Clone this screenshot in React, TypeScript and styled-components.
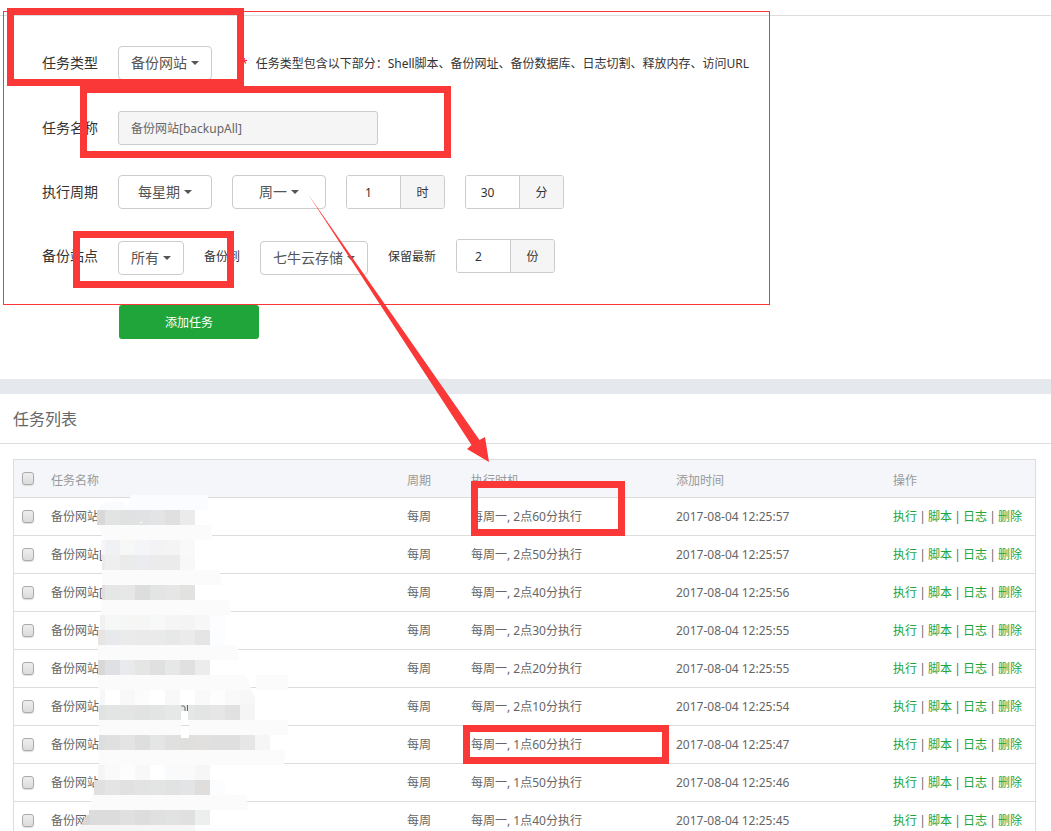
import React from "react";
import styled, { createGlobalStyle } from "styled-components";

const RED = "#fb3838";
const BORDER = "#cccccc";
const LINE = "#dddddd";
const GREEN = "#20a53a";

const GlobalStyle = createGlobalStyle`
  * { box-sizing: border-box; }
  body {
    margin: 0;
    background: #fff;
    color: #333;
    font: 12px/18px "Noto Sans", "Noto Sans CJK SC", sans-serif;
  }
  button, input, select { font-family: inherit; }
`;

const Page = styled.main`
  position: relative;
  height: 100vh;
  overflow: hidden;
  padding-top: 15px;
`;

const FormPanel = styled.form`
  display: flex;
  flex-direction: column;
  gap: 30px;
  padding: 30px 42px 40px;
  border-top: 1px solid ${LINE};
`;

const FormRow = styled.div<{ $staggered?: boolean }>`
  display: flex;
  align-items: ${(p) => (p.$staggered ? "flex-start" : "center")};
  gap: 20px;
  min-height: ${(p) => (p.$staggered ? 36 : 34)}px;
  &:first-child { margin-bottom: 1px; }
`;

const RowLabel = styled.label`
  flex: none;
  width: 56px;
  font-size: 14px;
  line-height: 34px;
  white-space: nowrap;
`;

const InlineLabel = styled.label`
  line-height: 36px;
  white-space: nowrap;
`;

const Hint = styled.p`
  margin: 0 0 0 9px;
  padding-top: 2px;
  white-space: nowrap;
`;

const Required = styled.span`
  margin-right: 8px;
  color: #f00;
`;

const SelectBox = styled.div<{ $width: number }>`
  display: flex;
  flex: none;
  align-items: center;
  align-self: flex-end;
  justify-content: center;
  gap: 4px;
  width: ${(p) => p.$width}px;
  height: 34px;
  border: 1px solid ${BORDER};
  border-radius: 4px;
  background: #fff;
`;

const Select = styled.select<{ $chars: number }>`
  width: ${(p) => p.$chars}em;
  height: 32px;
  padding: 0 0 2px;
  border: 0;
  outline: 0;
  appearance: none;
  background: transparent;
  color: #555;
  font-size: 14px;
`;

const Caret = styled.span`
  border: 4px solid transparent;
  border-top-color: #555;
  border-bottom-width: 0;
`;

const NameInput = styled.input`
  width: 260px;
  height: 34px;
  padding: 0 12px;
  border: 1px solid ${BORDER};
  border-radius: 3px;
  background: #f5f5f5;
  color: #666;
  font-size: 12px;
`;

const UnitGroup = styled.div`
  display: flex;
  width: 99px;
  height: 34px;
  border: 1px solid ${BORDER};
  border-radius: 3px;
  overflow: hidden;
`;

const UnitInput = styled.input`
  flex: 1;
  min-width: 0;
  padding: 0 10px 0 0;
  border: 0;
  color: #333;
  font-size: 12px;
  text-align: center;
  appearance: textfield;
  &::-webkit-inner-spin-button { appearance: none; margin: 0; }
`;

const Unit = styled.span`
  width: 44px;
  border-left: 1px solid ${BORDER};
  background: #f5f5f5;
  line-height: 34px;
  text-align: center;
`;

const SubmitButton = styled.button`
  width: 140px;
  height: 34px;
  margin-left: 77px;
  padding: 0;
  border: 0;
  border-radius: 3px;
  background: ${GREEN};
  color: #fff;
  font-size: 12px;
`;

const ListPanel = styled.section`
  border-top: 15px solid #e5e8ed;
`;

const ListTitle = styled.h2`
  margin: 0;
  padding: 2px 13px 0;
  border-bottom: 1px solid ${LINE};
  color: #666;
  font-size: 16px;
  font-weight: 400;
  line-height: 47px;
`;

const TableWrap = styled.div`
  padding: 15px 15px 15px 13px;
`;

const TaskTable = styled.table`
  width: 100%;
  table-layout: fixed;
  border: 1px solid ${LINE};
  border-collapse: separate;
  border-spacing: 0;
  color: #666;
`;

const Col = styled.col<{ $width?: number }>`
  width: ${(p) => (p.$width ? `${p.$width}px` : "auto")};
`;

const HeadCell = styled.th`
  height: 38px;
  padding: 4px 8px 0;
  border-bottom: 1px solid ${LINE};
  background: #f4f6fa;
  color: #999;
  font-weight: 400;
  text-align: left;
  &:first-child { padding-top: 0; }
`;

const Cell = styled.td`
  height: 38px;
  padding: 0 8px;
  border-bottom: 1px solid ${LINE};
  white-space: nowrap;
`;

const Check = styled.input`
  display: block;
  width: 12px;
  height: 13px;
  margin: 0;
  border: 1px solid #aaa;
  border-radius: 3px;
  appearance: none;
  background: linear-gradient(#eee, #dcdcdc);
  box-shadow: 0 1px 1px #ddd;
`;

const Actions = styled.div`
  display: flex;
`;

const Action = styled.a`
  color: ${GREEN};
  text-decoration: none;
`;

const Separator = styled.span`
  width: 11px;
  text-align: center;
`;

const Overlay = styled.svg`
  position: absolute;
  top: 0;
  left: 0;
  pointer-events: none;
`;

type DropdownProps = { id: string; label?: string; value: string; width: number };

function Dropdown({ id, label, value, width }: DropdownProps) {
  return (
    <SelectBox $width={width}>
      <Select id={id} aria-label={label} $chars={value.length}>
        <option>{value}</option>
      </Select>
      <Caret />
    </SelectBox>
  );
}

type UnitFieldProps = { id: string; label?: string; value: number; unit: string };

function UnitField({ id, label, value, unit }: UnitFieldProps) {
  return (
    <UnitGroup>
      <UnitInput id={id} type="number" defaultValue={value} aria-label={label} />
      <Unit>{unit}</Unit>
    </UnitGroup>
  );
}

const tasks = [
  { name: "备份网站", when: "每周一, 2点60分执行", added: "2017-08-04 12:25:57" },
  { name: "备份网站[", when: "每周一, 2点50分执行", added: "2017-08-04 12:25:57" },
  { name: "备份网站[", when: "每周一, 2点40分执行", added: "2017-08-04 12:25:56" },
  { name: "备份网站", when: "每周一, 2点30分执行", added: "2017-08-04 12:25:55" },
  { name: "备份网站", when: "每周一, 2点20分执行", added: "2017-08-04 12:25:55" },
  { name: "备份网站", when: "每周一, 2点10分执行", added: "2017-08-04 12:25:54" },
  { name: "备份网站", when: "每周一, 1点60分执行", added: "2017-08-04 12:25:47" },
  { name: "备份网站", when: "每周一, 1点50分执行", added: "2017-08-04 12:25:46" },
  { name: "备份网站", when: "每周一, 1点40分执行", added: "2017-08-04 12:25:45" },
];

const actions = ["执行", "脚本", "日志", "删除"];

// Pale brush strokes under the pixelated site names.
const strokes: { points: string; fill: string }[] = [
  { points: "131,495 208,495 208,510 128,510", fill: "#fbfcff" },
  { points: "98,510 103,503 112,501 122,502 128,508 128,510", fill: "#fafbfe" },
  { points: "98,525 211,525 212,540 104,540", fill: "#fbfbfb" },
  { points: "102,570 219,570 222,585 102,585", fill: "#fbfbfb" },
  { points: "102,600 229,600 231,615 101,615", fill: "#fbfbfb" },
  { points: "98,645 237,645 239,660 98,660", fill: "#fbfbfb" },
  { points: "98,675 245,675 252,690 98,690", fill: "#fbfbfb" },
  { points: "256,675 288,675 288,690 256,690", fill: "#fbfbfb" },
  { points: "251,690 255,697 255,720 240,720 240,690", fill: "#f7f7f7" },
  { points: "99,720 288,720 288,735 99,735", fill: "#fbfbfb" },
  { points: "99,750 286,750 284,765 99,765", fill: "#fbfbfb" },
  { points: "92,795 247,795 248,810 90,810", fill: "#fbfbfb" },
  { points: "84,820 195,825 195,831 78,831", fill: "#f6f6f6" },
];

// Each strip is 15px high; its first tile runs from x to the next 15px grid line.
const TILE = 15;
const strips: { y: number; x: number; tiles: string[] }[] = [
  { y: 510, x: 97, tiles: ["#d8d8d8", "#e2e4e4", "#e0e2e1", "#e0e2e4", "#e3e4e5", "#e0e0e0", "#ebebeb"] },
  { y: 540, x: 101, tiles: ["#f6f6f8", "#f0f1f5", "#f7f7f5", "#f4f5f8", "#f3f3f5", "#f4f4f4", "#f9f9f9"] },
  { y: 555, x: 102, tiles: ["#eaeaea", "#efeff0", "#ebebec", "#eaecef", "#ebebeb", "#ebebeb", "#f8f8f8"] },
  { y: 585, x: 102, tiles: ["#dfdfdf", "#e5e7e7", "#e7e7e7", "#dddddd", "#e3e4e4", "#e6e6e6", "#e2e2e1"] },
  { y: 615, x: 100, tiles: ["#f1f1f1", "#f6f8f8", "#f6f6f7", "#f6f6f4", "#f7f9f8", "#f5f5f5", "#f4f4f4", "#f7f7f7", "#fdfdff"] },
  { y: 630, x: 98, tiles: ["#e7e4e3", "#e7e9ed", "#ebebeb", "#eaeaea", "#eaeaea", "#e7e9e8", "#ebebeb", "#e5e5e5", "#fcfdff"] },
  { y: 660, x: 98, tiles: ["#d8d8d8", "#dfe0e3", "#e8eaeb", "#e5e5e4", "#e0e0e0", "#e5e8e7", "#e0e0e0", "#ececec"] },
  { y: 690, x: 100, tiles: ["#f6f7f8", "#ffffff", "#f8f8f8", "#fcfcfc", "#ffffff", "#f8f8f8", "#ffffff", "#f9f9f9", "#fdfdfd", "#f9f9f9"] },
  { y: 705, x: 99, tiles: ["#e1e3e3", "#e3e5e5", "#e3e4e4", "#e2e2e2", "#e3e5e4", "#e6e7e7", "#e5e6e7", "#e3e5e4", "#e6e6e6", "#e1e1e1", "#f5f5f5"] },
  { y: 735, x: 99, tiles: ["#dedede", "#e0e0e0", "#e3e4e3", "#dedede", "#e4e5e5", "#e0e0e0", "#dfdfdd", "#e2e0df", "#dfdfdf", "#dfdfdf", "#e6e6e6", "#f6f6f6"] },
  { y: 765, x: 98, tiles: ["#f5f5f5", "#fafafa", "#fdfdfd", "#f8f8f8", "#ffffff", "#f8fafb", "#fafafa", "#f6f6f6"] },
  { y: 780, x: 94, tiles: ["#e0e0e0", "#e4e4e4", "#e1e1e1", "#e3e3e3", "#e3e4e4", "#e1e3e2", "#e3e4e5", "#e0dedd", "#fcfdff"] },
  { y: 810, x: 89, tiles: ["#d8d5d6", "#dcdcdc", "#dcdcdc", "#e0e0e0", "#dddddd", "#e0e0e0", "#e0e3e2", "#e0e0e0", "#edefee"] },
];

function Strip({ y, x, tiles }: { y: number; x: number; tiles: string[] }) {
  const firstEdge = (Math.floor(x / TILE) + 1) * TILE;
  return (
    <g>
      {tiles.map((fill, i) => {
        const left = i === 0 ? x : firstEdge + (i - 1) * TILE;
        const right = firstEdge + i * TILE;
        return <rect key={i} x={left} y={y} width={right - left} height={TILE} fill={fill} />;
      })}
    </g>
  );
}

// Outer bounds of the thick highlight frames.
const frames = [
  { x: 7, y: 8, w: 237, h: 78 },
  { x: 80, y: 86, w: 371, h: 72 },
  { x: 73, y: 231, w: 161, h: 57 },
  { x: 471, y: 481, w: 154, h: 55 },
  { x: 463, y: 725, w: 206, h: 39 },
];

function Annotations() {
  return (
    <Overlay width="1051" height="831" viewBox="0 0 1051 831" aria-hidden="true">
      <g shapeRendering="crispEdges">
        {strokes.map((s) => (
          <polygon key={s.points} points={s.points} fill={s.fill} />
        ))}
        {strips.map((s) => (
          <Strip key={s.y} {...s} />
        ))}
        <path d="M90 814l-5 3-4 8h9z" fill="#d8d5d6" />
        <path d="M181 711h7v12l1 15h-8z" fill="#fff" />
        <path d="M181 725h8" stroke={LINE} />
        <path d="M140 523v-1h2" stroke="#fff" fill="none" />
      </g>
      <path d="M181.500 706h2q1.500 0 1.500 2v3M187.500 705v6" stroke="#666" fill="none" />
      <rect x="3.500" y="11.500" width="766" height="293" fill="none" stroke={RED} />
      {frames.map((f) => (
        <rect
          key={`${f.x}-${f.y}`}
          x={f.x + 3.5}
          y={f.y + 3.5}
          width={f.w - 7}
          height={f.h - 7}
          fill="none"
          stroke={RED}
          strokeWidth="7"
        />
      ))}
      <path d="M308 194L479.500 440 485 437 489 462 467 449 471.500 445Z" fill={RED} />
    </Overlay>
  );
}

export default function App() {
  return (
    <>
      <GlobalStyle />
      <Page>
        <FormPanel>
          <FormRow>
            <RowLabel htmlFor="type">任务类型</RowLabel>
            <Dropdown id="type" value="备份网站" width={94} />
            <Hint>
              <Required>*</Required>
              任务类型包含以下部分：Shell脚本、备份网址、备份数据库、日志切割、释放内存、访问URL
            </Hint>
          </FormRow>
          <FormRow>
            <RowLabel htmlFor="name">任务名称</RowLabel>
            <NameInput id="name" type="text" readOnly value="备份网站[backupAll]" />
          </FormRow>
          <FormRow>
            <RowLabel htmlFor="cycle">执行周期</RowLabel>
            <Dropdown id="cycle" value="每星期" width={94} />
            <Dropdown id="weekday" label="星期" value="周一" width={94} />
            <UnitField id="hour" label="时" value={1} unit="时" />
            <UnitField id="minute" label="分" value={30} unit="分" />
          </FormRow>
          <FormRow $staggered>
            <RowLabel htmlFor="site">备份站点</RowLabel>
            <Dropdown id="site" value="所有" width={66} />
            <InlineLabel htmlFor="target">备份到</InlineLabel>
            <Dropdown id="target" value="七牛云存储" width={108} />
            <InlineLabel htmlFor="keep">保留最新</InlineLabel>
            <UnitField id="keep" value={2} unit="份" />
          </FormRow>
          <SubmitButton type="button">添加任务</SubmitButton>
        </FormPanel>

        <ListPanel>
          <ListTitle>任务列表</ListTitle>
          <TableWrap>
            <TaskTable>
              <colgroup>
                <Col $width={29} />
                <Col />
                <Col $width={64} />
                <Col $width={205} />
                <Col $width={217} />
                <Col $width={150} />
              </colgroup>
              <thead>
                <tr>
                  <HeadCell>
                    <Check type="checkbox" aria-label="全选" />
                  </HeadCell>
                  <HeadCell>任务名称</HeadCell>
                  <HeadCell>周期</HeadCell>
                  <HeadCell>执行时机</HeadCell>
                  <HeadCell>添加时间</HeadCell>
                  <HeadCell>操作</HeadCell>
                </tr>
              </thead>
              <tbody>
                {tasks.map((task) => (
                  <tr key={task.when}>
                    <Cell>
                      <Check type="checkbox" aria-label={task.when} />
                    </Cell>
                    <Cell>{task.name}</Cell>
                    <Cell>每周</Cell>
                    <Cell>{task.when}</Cell>
                    <Cell>{task.added}</Cell>
                    <Cell>
                      <Actions>
                        {actions.map((action, i) => (
                          <React.Fragment key={action}>
                            {i > 0 && <Separator>|</Separator>}
                            <Action href="#">{action}</Action>
                          </React.Fragment>
                        ))}
                      </Actions>
                    </Cell>
                  </tr>
                ))}
              </tbody>
            </TaskTable>
          </TableWrap>
        </ListPanel>
        <Annotations />
      </Page>
    </>
  );
}
